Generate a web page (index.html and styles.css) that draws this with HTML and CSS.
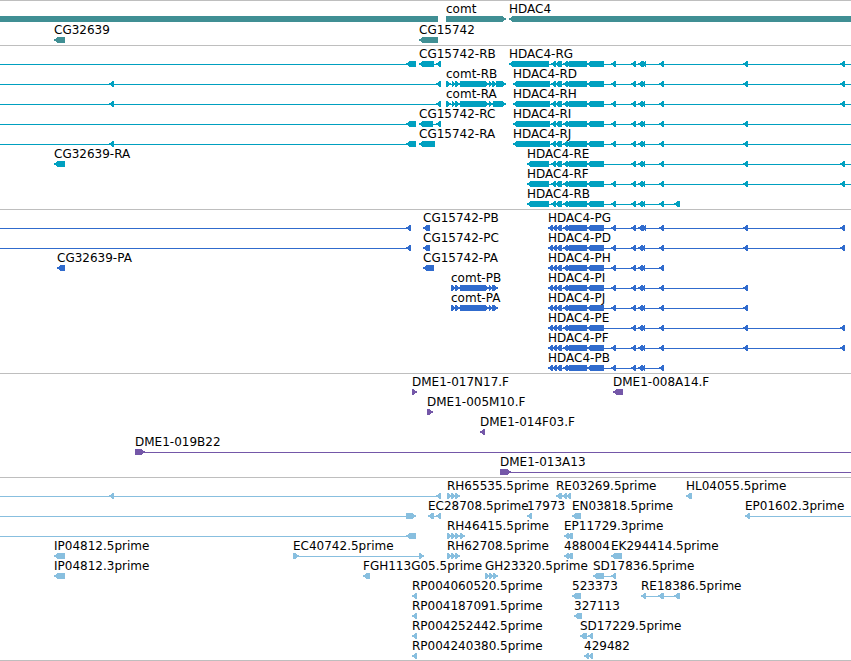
FILE: index.html
```
<!DOCTYPE html>
<html lang="en">
<head>
    <meta charset="UTF-8">
    <meta name="viewport" content="width=device-width, initial-scale=1.0">
    <title>Genome Browser</title>
    <link rel="stylesheet" href="styles.css">
</head>
<body>
    <main class="tracks">
        <section class="track genes" id="genes" aria-label="Genes"></section>
        <section class="track transcripts" id="transcripts" aria-label="Transcripts"></section>
        <section class="track proteins" id="proteins" aria-label="Coding sequences"></section>
        <section class="track bacs" id="bacs" aria-label="Clone ends"></section>
        <section class="track ests" id="ests" aria-label="ESTs"></section>
    </main>
    <script src="tracks.js"></script>
</body>
</html>
```
FILE: styles.css
```
body {
    margin: 0;
    background-color: #fff;
    color: #000;
    font-family: "DejaVu Sans", Verdana, sans-serif;
    font-size: 12px;
    line-height: 14px;
}

.tracks {
    overflow: hidden;
    border-bottom: 1px solid #bebebe;
}

.track {
    display: flex;
    flex-direction: column;
    padding: 1px 0 2px;
    border-top: 1px solid #bebebe;
}

.track:last-child {
    padding-bottom: 1px;
}

.row {
    position: relative;
    height: 20px;
}

/* features sit at their place on the sequence */
.feature {
    position: absolute;
    top: 0;
}

.label {
    display: block;
    height: 14px;
    white-space: nowrap;
}

.glyph {
    display: block;
    height: 6px;
    fill: currentColor;
    shape-rendering: crispEdges;
}

.genes {
    gap: 1px;
}

.genes .glyph {
    color: #408f94;
}

.transcripts .glyph {
    color: #00a0c0;
}

.proteins .glyph {
    color: #306bcd;
}

.bacs .glyph {
    color: #7457a8;
}

.ests .glyph {
    color: #88bfdf;
}
```
FILE: tracks.js
```
// length of the region on show, and a little past it for features that run off
const REGION = 851;
const END = 870;

// where each pixel row of an arrow head starts, counted from its tip
const HEAD = [3, 2, 0, 0, 2, 3];

// exons shared by the HDAC4 transcripts
const hdacMid = [[563, 568], [566, 587], [587, 604]];
const hdac611 = [611, 616];
const hdac743 = [743, 748];
const hdac840 = [840, 845];
const hdacUp = [[631, 636], [638, 643], [641, 645], [659, 664]];
const hdacUpLong = [[631, 636], [638, 643], [640, 644], [642, 646], [659, 664]];

function hdacR(name, first, rest, to) {
    return { name: name, strand: '-', to: to, exons: [first, [551, 556], [555, 562], ...hdacMid, ...rest] };
}

function hdacP(name, rest) {
    return { name: name, strand: '-', exons: [[548, 553], [552, 557], [556, 562], ...hdacMid, ...rest] };
}

function f(name, strand, exons, from, to) {
    return { name: name, strand: strand, exons: exons, from: from, to: to };
}

const comtRB = [[446, 451], [452, 456], [455, 460], [460, 489], [489, 493], [492, 497], [496, 506]];
const comtRA = [[446, 451], [452, 456], [455, 460], [460, 489], [489, 493], [493, 506]];
const comtP = [[451, 456], [455, 460], [460, 489], [489, 493], [492, 498]];
const rh = [[447, 452], [451, 456], [455, 460]];

const tracks = {
    genes: [
        [f('', '-', [[-10, 438]]), f('comt', '+', [[446, 506]]), f('HDAC4', '-', [[509, END]])],
        [f('CG32639', '-', [[54, 65]]), f('CG15742', '-', [[419, 438]])]
    ],
    transcripts: [
        [f('', '-', [[406, 416]], 0), f('CG15742-RB', '-', [[419, 434], [436, 441]]),
            hdacR('HDAC4-RG', [509, 549], [hdac611, ...hdacUpLong, hdac743, hdac840], END)],
        [f('', '-', [[109, 114], [436, 441]], 0), f('comt-RB', '+', comtRB),
            hdacR('HDAC4-RD', [513, 550], [hdac611, ...hdacUp, hdac743, hdac840], END)],
        [f('', '-', [[109, 114], [436, 441]], 0), f('comt-RA', '+', comtRA),
            hdacR('HDAC4-RH', [513, 550], [hdac611, ...hdacUp, hdac840], END)],
        [f('', '-', [[406, 416]], 0), f('CG15742-RC', '-', [[419, 433], [436, 441]]),
            hdacR('HDAC4-RI', [513, 550], [hdac611, ...hdacUp, hdac743], END)],
        [f('', '-', [[109, 114], [406, 416]], 0), f('CG15742-RA', '-', [[419, 435]]),
            hdacR('HDAC4-RJ', [513, 550], [hdac611, ...hdacUp, hdac743], END)],
        [f('CG32639-RA', '-', [[54, 65]]), hdacR('HDAC4-RE', [527, 549], [...hdacUp, hdac743, hdac840], END)],
        [hdacR('HDAC4-RF', [527, 549], [hdac611, ...hdacUp, hdac743, hdac840], END)],
        [hdacR('HDAC4-RB', [527, 549], [hdac611, ...hdacUp, [674, 680]])]
    ],
    proteins: [
        [f('', '-', [[406, 411]], 0), f('CG15742-PB', '-', [[423, 430]]),
            hdacP('HDAC4-PG', [hdac611, ...hdacUpLong, hdac743, hdac840])],
        [f('', '-', [[406, 411]], 0), f('CG15742-PC', '-', [[423, 430]]),
            hdacP('HDAC4-PD', [hdac611, ...hdacUp, hdac743, hdac840])],
        [f('CG32639-PA', '-', [[57, 65]]), f('CG15742-PA', '-', [[423, 434]]), hdacP('HDAC4-PH', [hdac611, ...hdacUp])],
        [f('comt-PB', '+', comtP), hdacP('HDAC4-PI', [hdac611, ...hdacUp, hdac743])],
        [f('comt-PA', '+', comtP), hdacP('HDAC4-PJ', [hdac611, ...hdacUp, hdac743])],
        [hdacP('HDAC4-PE', [...hdacUp, hdac743, hdac840])],
        [hdacP('HDAC4-PF', [hdac611, ...hdacUp, hdac743, hdac840])],
        [hdacP('HDAC4-PB', [hdac611, ...hdacUp])]
    ],
    bacs: [
        [f('DME1-017N17.F', '+', [[412, 417]]), f('DME1-008A14.F', '-', [[613, 623]])],
        [f('DME1-005M10.F', '+', [[427, 433]])],
        [f('DME1-014F03.F', '-', [[480, 485]])],
        [f('DME1-019B22', '+', [[135, 145]], 135, END)],
        [f('DME1-013A13', '+', [[500, 511]], 500, END)]
    ],
    ests: [
        [f('', '-', [[109, 114], [436, 441]], 0), f('RH65535.5prime', '+', rh),
            f('RE03269.5prime', '-', [[556, 562], [562, 567], [566, 571]]), f('HL04055.5prime', '-', [[686, 692]])],
        [f('', '+', [[406, 416]], 0), f('EC28708.5prime', '-', [[428, 434], [436, 441]]), f('17973', '-', [[527, 532]]),
            f('EN03818.5prime', '-', [[572, 581]]), f('EP01602.3prime', '-', [[745, 750]], 745, END)],
        [f('', '-', [[406, 416]], 0), f('RH46415.5prime', '+', [...rh, [460, 465]]),
            f('EP11729.3prime', '-', [[564, 569], [567, 573]])],
        [f('IP04812.5prime', '-', [[54, 65]]), f('EC40742.5prime', '+', [[293, 299], [419, 424]]), f('RH62708.5prime', '+', rh),
            f('488004', '-', [[564, 569], [567, 573]]), f('EK294414.5prime', '-', [[611, 622]])],
        [f('IP04812.3prime', '-', [[54, 65]]), f('FGH113G05.5prime', '-', [[363, 370]]),
            f('GH23320.5prime', '+', [[485, 490], [489, 494], [493, 498]]), f('SD17836.5prime', '-', [[593, 604], [611, 616]])],
        [f('RP004060520.5prime', '-', [[412, 417]]), f('523373', '-', [[572, 581]]),
            f('RE18386.5prime', '-', [[641, 646], [658, 664], [674, 680]])],
        [f('RP004187091.5prime', '-', [[412, 417]]), f('327113', '-', [[574, 582]])],
        [f('RP004252442.5prime', '-', [[412, 417]]), f('SD17229.5prime', '-', [[580, 587], [588, 593]])],
        [f('RP004240380.5prime', '-', [[412, 417]]), f('429482', '-', [[584, 589], [588, 593]])]
    ]
};

// block with a pointed end on the side of its strand, one pixel row at a time
function exonPath(a, b, strand) {
    return HEAD.map((inset, y) => {
        const cut = Math.min(inset, b - a - 1);
        const left = strand === '-' ? a + cut : a;
        const right = strand === '-' ? b : b - cut;
        return `M${left} ${y}H${right}V${y + 1}H${left}Z`;
    }).join('');
}

function drawFeature(item, scale) {
    const starts = item.exons.map((e) => e[0]);
    const ends = item.exons.map((e) => e[1]);
    const from = item.from === undefined ? Math.min(...starts) : item.from;
    const to = item.to === undefined ? Math.max(...ends) : item.to;
    const width = Math.round((to - from) * scale);
    let d = `M0 3H${width}V4H0Z`;
    item.exons.forEach((e) => {
        d += exonPath(Math.round((e[0] - from) * scale), Math.round((e[1] - from) * scale), item.strand);
    });
    return `<div class="feature" style="left: ${Math.round(from * scale)}px">
        <span class="label">${item.name}</span>
        <svg class="glyph" width="${width}" height="6" aria-hidden="true"><path d="${d}"/></svg>
    </div>`;
}

function draw() {
    const scale = document.documentElement.clientWidth / REGION;
    Object.keys(tracks).forEach((id) => {
        document.getElementById(id).innerHTML = tracks[id].map((row) =>
            '<div class="row">' + row.map((item) => drawFeature(item, scale)).join('') + '</div>'
        ).join('');
    });
}

draw();
window.addEventListener('resize', draw);
```
